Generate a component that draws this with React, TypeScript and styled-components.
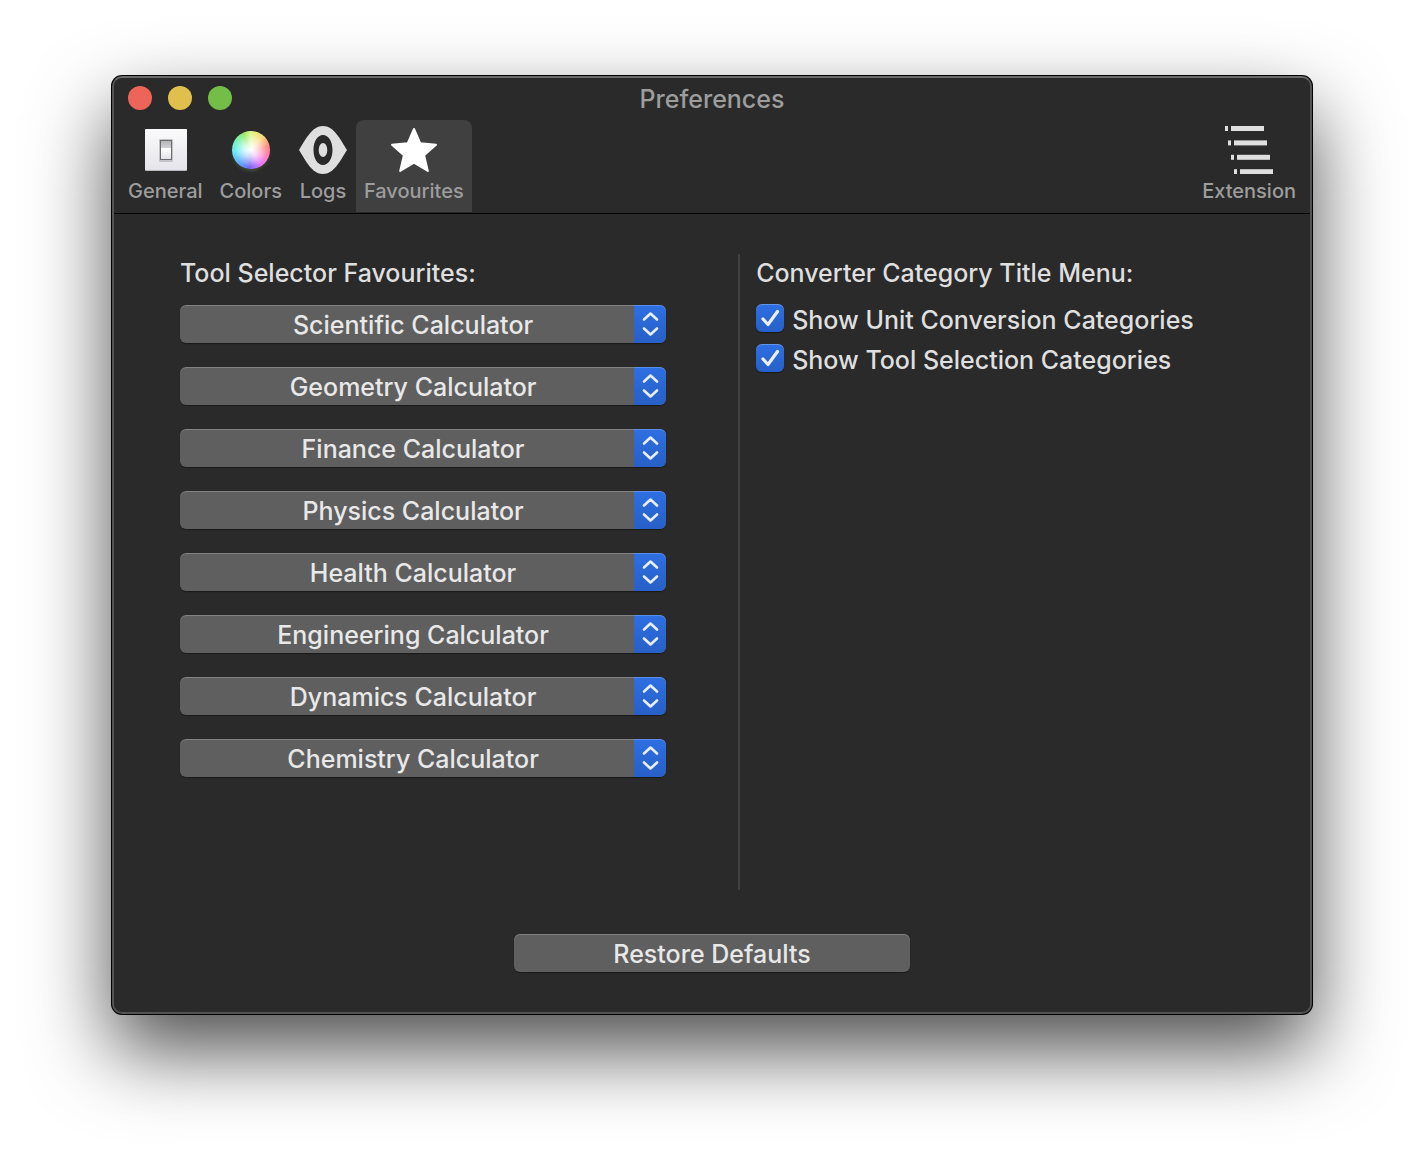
import React from "react";
import styled, { createGlobalStyle } from "styled-components";

const GlobalStyle = createGlobalStyle`
  *, *::before, *::after { box-sizing: border-box; }
  body {
    margin: 0;
    background: #fff;
    color: #dfdfdf;
    font-family: Inter, "Liberation Sans", sans-serif;
    font-size: 25px;
    font-weight: 500;
    line-height: 38px;
  }
  button, select, input { font: inherit; color: inherit; }
`;

const Desktop = styled.div`
  display: flex;
  min-height: 100vh;
  padding: 76px 112px 148px;
  align-items: flex-start;
  overflow: hidden;
`;

const Window = styled.div`
  flex: 1;
  min-width: 0;
  border: 2px solid #535353;
  border-top-color: #6a6a6a;
  border-radius: 10px;
  background: #2a2a2a;
  box-shadow: 0 0 0 1px #000, 0 36px 80px rgba(0, 0, 0, 0.7);
`;

const TitleBar = styled.header`
  display: grid;
  grid-template-columns: 1fr auto 1fr;
  align-items: center;
  height: 42px;
  padding: 0 14px;
`;

const Lights = styled.div`
  display: flex;
  gap: 16px;
  padding-bottom: 2px;
`;

const Light = styled.button<{ $color: string }>`
  width: 24px;
  height: 24px;
  padding: 0;
  border: 0;
  border-radius: 50%;
  background: ${(p) => p.$color};
`;

const Title = styled.h1`
  margin: 0;
  font-size: 25px;
  font-weight: 500;
  color: #9d9d9d;
`;

const Toolbar = styled.nav`
  display: flex;
  gap: 1px;
  padding: 0 6px 1px;
  border-bottom: 1px solid #000;
`;

const Tab = styled.button<{ $active?: boolean; $end?: boolean }>`
  display: flex;
  flex-direction: column;
  align-items: center;
  height: 92px;
  padding: 6px 8px 0;
  border: 0;
  border-radius: 8px 8px 0 0;
  background: ${(p) => (p.$active ? "#404040" : "transparent")};
  margin-left: ${(p) => (p.$end ? "auto" : "0")};
  color: #9d9d9d;
  font-size: 20px;
  line-height: 34px;
  white-space: nowrap;

  svg { display: block; flex: none; }
`;

const Body = styled.main`
  padding: 40px 0;
`;

const Columns = styled.div`
  display: grid;
  grid-template-columns: 23fr 2px 21fr;
  min-height: 636px;
`;

const Divider = styled.div`
  background: #404040;
`;

const Column = styled.section<{ $pad: string }>`
  padding: ${(p) => p.$pad};
  min-width: 0;
`;

const Heading = styled.h2`
  margin: 0;
  font-size: 25px;
  font-weight: 500;
`;

const Stack = styled.div<{ $gap: number; $top: number }>`
  display: flex;
  flex-direction: column;
  gap: ${(p) => p.$gap}px;
  margin-top: ${(p) => p.$top}px;
`;

const Popup = styled.div`
  position: relative;
  height: 38px;
  border-radius: 6px;
  overflow: hidden;
  background: #5f5f5f;
  box-shadow: 0 1px 1px rgba(0, 0, 0, 0.4);

  &::after {
    content: "";
    position: absolute;
    inset: 0;
    border-radius: 6px;
    box-shadow: inset 0 1px 0 rgba(255, 255, 255, 0.22);
    pointer-events: none;
  }
`;

const Select = styled.select`
  display: block;
  appearance: none;
  width: 100%;
  height: 38px;
  padding: 2px 20px 0 0;
  border: 0;
  background: transparent;
  color: #e8e8e8;
  line-height: 36px;
  text-align: center;
  text-align-last: center;
`;

const Stepper = styled.span`
  position: absolute;
  top: 0;
  right: 0;
  width: 32px;
  height: 38px;
  background: linear-gradient(#2e6fe2, #2760c6);
  pointer-events: none;

  svg { display: block; }
`;

const CheckRow = styled.label`
  display: flex;
  gap: 8px;
  line-height: 32px;
`;

const CheckBox = styled.span`
  position: relative;
  flex: none;
  width: 28px;
  height: 28px;

  svg {
    position: absolute;
    inset: 0;
    pointer-events: none;
  }
  input:not(:checked) + svg { display: none; }
`;

const CheckInput = styled.input`
  display: block;
  appearance: none;
  width: 28px;
  height: 28px;
  margin: 0;
  border-radius: 6px;
  background: #5f5f5f;
  box-shadow: inset 0 1px 0 rgba(255, 255, 255, 0.25), 0 1px 1px rgba(0, 0, 0, 0.4);

  &:checked { background: linear-gradient(#2e6fe2, #2760c6); }
`;

const Footer = styled.footer`
  display: flex;
  justify-content: center;
  margin-top: 44px;
`;

const PushButton = styled.button`
  width: 396px;
  height: 38px;
  padding: 2px 0 0;
  border: 0;
  border-radius: 6px;
  background: #5f5f5f;
  box-shadow: inset 0 1px 0 rgba(255, 255, 255, 0.22), 0 1px 1px rgba(0, 0, 0, 0.4);
  color: #e8e8e8;
  line-height: 36px;
`;

const Wheel = styled.span`
  display: flex;
  align-items: center;
  justify-content: center;
  width: 48px;
  height: 48px;

  &::before {
    content: "";
    width: 38px;
    height: 38px;
    border-radius: 50%;
    background:
      radial-gradient(circle, #fff 0%, rgba(255, 255, 255, 0.75) 25%, rgba(255, 255, 255, 0.1) 68%, transparent 71%),
      conic-gradient(#d8f56a, #ffcf5e 40deg, #ff6d68 80deg, #ff62b4 115deg, #e05cff 145deg, #5a48f0 185deg, #3c8cf8 215deg, #44e6f6 265deg, #5cf0a8 305deg, #7be84e 335deg, #d8f56a);
    box-shadow: 0 3px 4px -2px rgba(120, 150, 90, 0.5), inset 0 0 1px 1px rgba(255, 255, 255, 0.2);
  }
`;

const GeneralIcon = () => (
  <svg width="48" height="48" viewBox="0 0 48 48" aria-hidden="true">
    <defs>
      <linearGradient id="plate" x1="0" y1="0" x2="0" y2="1">
        <stop offset="0" stopColor="#fbfbfc" />
        <stop offset="1" stopColor="#e4e4ea" />
      </linearGradient>
      <linearGradient id="rocker" x1="0" y1="0" x2="0" y2="1">
        <stop offset="0" stopColor="#b4b4b8" />
        <stop offset="0.4" stopColor="#d2d2d6" />
        <stop offset="0.41" stopColor="#fff" />
        <stop offset="1" stopColor="#e2e2e6" />
      </linearGradient>
    </defs>
    <rect x="4" y="3" width="42" height="42" rx="1" fill="#b9b9bd" />
    <rect x="4" y="3" width="42" height="41" rx="1" fill="url(#plate)" />
    <rect x="18" y="13" width="14" height="23" rx="1" fill="#c4c4c8" />
    <rect x="19.500" y="14.500" width="11" height="19" fill="url(#rocker)" stroke="#6c6c70" />
  </svg>
);

const LogsIcon = () => (
  <svg width="48" height="48" viewBox="0 0 48 48" aria-hidden="true">
    <path
      fill="#dfdfdf"
      fillRule="evenodd"
      d="M0 24C7 13 13 0 24 0S41 13 48 24C41 35 35 48 24 48S7 35 0 24ZM24 9C18.500 9 14.500 15.500 14.500 24S18.500 39 24 39S33.500 32.500 33.500 24S29.500 9 24 9Z"
    />
    <ellipse cx="24" cy="24" rx="4.300" ry="7" fill="#dfdfdf" />
  </svg>
);

const StarIcon = () => (
  <svg width="48" height="48" viewBox="0 0 48 48" aria-hidden="true">
    <path
      fill="#fff"
      stroke="#fff"
      strokeWidth="2"
      strokeLinejoin="round"
      d="M24 3L30.200 17.200L46 18.800L34.100 29.200L37.800 45L24 36.600L10.200 45L13.900 29.200L2 18.800L17.800 17.200Z"
    />
  </svg>
);

const ExtensionIcon = () => (
  <svg width="48" height="48" viewBox="0 0 48 48" fill="#dfdfdf" aria-hidden="true">
    {[0, 1, 2, 3].map((i) => (
      <g key={i} transform={`translate(${i * 3} ${i * 14.4})`}>
        <rect x="0" y="0" width="3" height="5" />
        <rect x="6" y="0" width="33" height="5" />
      </g>
    ))}
  </svg>
);

const calculators = [
  "Scientific Calculator",
  "Geometry Calculator",
  "Finance Calculator",
  "Physics Calculator",
  "Health Calculator",
  "Engineering Calculator",
  "Dynamics Calculator",
  "Chemistry Calculator",
];

const categoryOptions = ["Show Unit Conversion Categories", "Show Tool Selection Categories"];

export default function App() {
  return (
    <>
      <GlobalStyle />
      <Desktop>
        <Window>
          <TitleBar>
            <Lights>
              <Light $color="#ed6459" aria-label="Close" />
              <Light $color="#e0bf4c" aria-label="Minimize" />
              <Light $color="#72be47" aria-label="Zoom" />
            </Lights>
            <Title>Preferences</Title>
          </TitleBar>
          <Toolbar>
            <Tab><GeneralIcon />General</Tab>
            <Tab><Wheel />Colors</Tab>
            <Tab><LogsIcon />Logs</Tab>
            <Tab $active aria-current="page"><StarIcon />Favourites</Tab>
            <Tab $end><ExtensionIcon />Extension</Tab>
          </Toolbar>
          <Body>
            <Columns>
              <Column $pad="0 72px 0 66px">
                <Heading>Tool Selector Favourites:</Heading>
                <Stack $gap={24} $top={13}>
                  {calculators.map((name, index) => (
                    <Popup key={name}>
                      <Select aria-label={`Favourite ${index + 1}`} defaultValue={name}>
                        {calculators.map((option) => (
                          <option key={option}>{option}</option>
                        ))}
                      </Select>
                      <Stepper>
                        <svg width="32" height="38" viewBox="0 0 32 38" fill="none" stroke="#e6edfb" strokeWidth="2.600" strokeLinecap="round" strokeLinejoin="round" aria-hidden="true">
                          <path d="M10 14.500L16.500 8.500L23 14.500M10 23.500L16.500 29.500L23 23.500" />
                        </svg>
                      </Stepper>
                    </Popup>
                  ))}
                </Stack>
              </Column>
              <Divider />
              <Column $pad="0 16px">
                <Heading>Converter Category Title Menu:</Heading>
                <Stack $gap={8} $top={12}>
                  {categoryOptions.map((name) => (
                    <CheckRow key={name}>
                      <CheckBox>
                        <CheckInput type="checkbox" defaultChecked />
                        <svg width="28" height="28" viewBox="0 0 28 28" fill="none" stroke="#e9effc" strokeWidth="3.200" strokeLinecap="round" strokeLinejoin="round" aria-hidden="true">
                          <path d="M7 15L12 20.500L21.500 7.500" />
                        </svg>
                      </CheckBox>
                      {name}
                    </CheckRow>
                  ))}
                </Stack>
              </Column>
            </Columns>
            <Footer>
              <PushButton>Restore Defaults</PushButton>
            </Footer>
          </Body>
        </Window>
      </Desktop>
    </>
  );
}
